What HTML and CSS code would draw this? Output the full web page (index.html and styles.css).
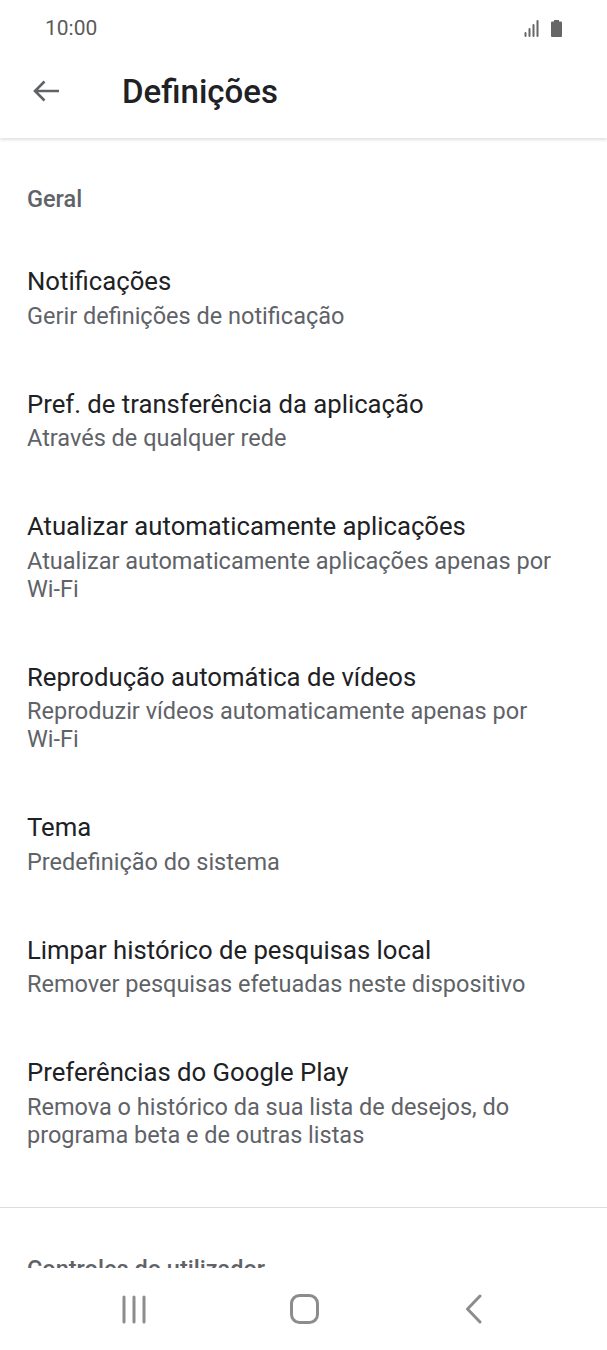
FILE: index.html
```html
<!DOCTYPE html>
<html lang="pt">
<head>
  <meta charset="UTF-8">
  <title>Definições</title>
  <link rel="stylesheet" href="styles.css">
</head>
<body>

  <!-- Barra de estado -->
  <div class="statusbar">
    <span class="hora">10:00</span>
    <div class="estado-icones">
      <svg width="16" height="17" viewBox="0 0 16 17">
        <rect x="0.5" y="12" width="2" height="5" rx="1" fill="#666"/>
        <rect x="4.5" y="8" width="2" height="9" rx="1" fill="#666"/>
        <rect x="8.5" y="4" width="2" height="13" rx="1" fill="#666"/>
        <rect x="12.5" y="0" width="2" height="17" rx="1" fill="#666"/>
      </svg>
      <svg width="11" height="17" viewBox="0 0 11 17">
        <rect x="3" y="0" width="5" height="2" fill="#666"/>
        <rect x="0" y="1.5" width="11" height="15.5" rx="1" fill="#666"/>
      </svg>
    </div>
  </div>

  <!-- Barra superior -->
  <header class="toolbar">
    <svg class="voltar" width="28" height="24" viewBox="0 0 28 24">
      <path d="M27 12H3M12.5 2.5L3 12l9.5 9.5" fill="none" stroke="#5f6368" stroke-width="2.6"/>
    </svg>
    <h1>Definições</h1>
  </header>

  <main class="conteudo">
    <section class="secao">
      <h2>Geral</h2>
      <ul class="lista">
        <li>
          <div class="titulo">Notificações</div>
          <div class="resumo">Gerir definições de notificação</div>
        </li>
        <li>
          <div class="titulo">Pref. de transferência da aplicação</div>
          <div class="resumo">Através de qualquer rede</div>
        </li>
        <li>
          <div class="titulo">Atualizar automaticamente aplicações</div>
          <div class="resumo">Atualizar automaticamente aplicações apenas por <span class="junto">Wi-Fi</span></div>
        </li>
        <li>
          <div class="titulo">Reprodução automática de vídeos</div>
          <div class="resumo">Reproduzir vídeos automaticamente apenas por <span class="junto">Wi-Fi</span></div>
        </li>
        <li>
          <div class="titulo">Tema</div>
          <div class="resumo">Predefinição do sistema</div>
        </li>
        <li>
          <div class="titulo">Limpar histórico de pesquisas local</div>
          <div class="resumo">Remover pesquisas efetuadas neste dispositivo</div>
        </li>
        <li>
          <div class="titulo">Preferências do Google Play</div>
          <div class="resumo">Remova o histórico da sua lista de desejos, do programa beta e de outras listas</div>
        </li>
      </ul>
    </section>

    <section class="secao">
      <h2>Controles do utilizador</h2>
    </section>
  </main>

  <!-- Barra de navegação -->
  <nav class="navbar">
    <svg width="24" height="29" viewBox="0 0 24 29">
      <path d="M2 2v25M12 2v25M22 2v25" stroke="#8c8c8c" stroke-width="3" stroke-linecap="round"/>
    </svg>
    <svg width="29" height="30" viewBox="0 0 29 30">
      <rect x="1.5" y="1.5" width="26" height="27" rx="8" fill="none" stroke="#8c8c8c" stroke-width="3"/>
    </svg>
    <svg width="18" height="30" viewBox="0 0 18 30">
      <path d="M15 2L2.5 15 15 28" fill="none" stroke="#8c8c8c" stroke-width="3" stroke-linecap="round" stroke-linejoin="round"/>
    </svg>
  </nav>

</body>
</html>
```

FILE: styles.css
```css
body {
  margin: 0;
  font-family: Roboto, "Noto Sans", Arial, sans-serif;
  background: #fff;
  color: #202124;
  height: 1350px;
  overflow: hidden;
  display: flex;
  flex-direction: column;
}

.statusbar {
  height: 56px;
  display: flex;
  align-items: center;
  justify-content: space-between;
  padding: 0 45px 0 45px;
  flex-shrink: 0;
}

.hora {
  font-size: 21px;
  color: #5a5a5a;
}

.estado-icones {
  display: flex;
  align-items: center;
  gap: 11px;
  margin-top: 1px;
}

.toolbar {
  height: 70px;
  display: flex;
  align-items: center;
  padding: 0 0 12px 32px;
  box-shadow: 0 2px 3px rgba(0, 0, 0, 0.12);
  position: relative;
  flex-shrink: 0;
}

.voltar {
  margin-right: 62px;
}

.toolbar h1 {
  margin: 0;
  font-size: 33px;
  font-weight: 500;
  color: #202124;
}

.conteudo {
  flex: 1;
  overflow: hidden;
}

.secao {
  padding: 47px 0 29px;
}

.secao + .secao {
  border-top: 1px solid #dcdcdc;
}

.secao h2 {
  margin: 0 27px;
  font-size: 23.5px;
  line-height: 28px;
  font-weight: 500;
  color: #5f6368;
}

.lista {
  list-style: none;
  margin: 23px 0 0;
  padding: 0;
}

.lista li {
  padding: 28px 40px 29px 27px;
}

.titulo {
  font-size: 25.7px;
  line-height: 34px;
  color: #202124;
}

.resumo {
  margin-top: 3.5px;
  font-size: 23.5px;
  line-height: 28px;
  color: #5f6368;
}

.junto {
  white-space: nowrap;
}

.navbar {
  height: 82px;
  flex-shrink: 0;
  background: #fff;
  display: grid;
  grid-template-columns: repeat(3, 170px);
  justify-items: center;
  align-items: center;
  padding: 0 0 0 49px;
  box-sizing: border-box;
}
```
